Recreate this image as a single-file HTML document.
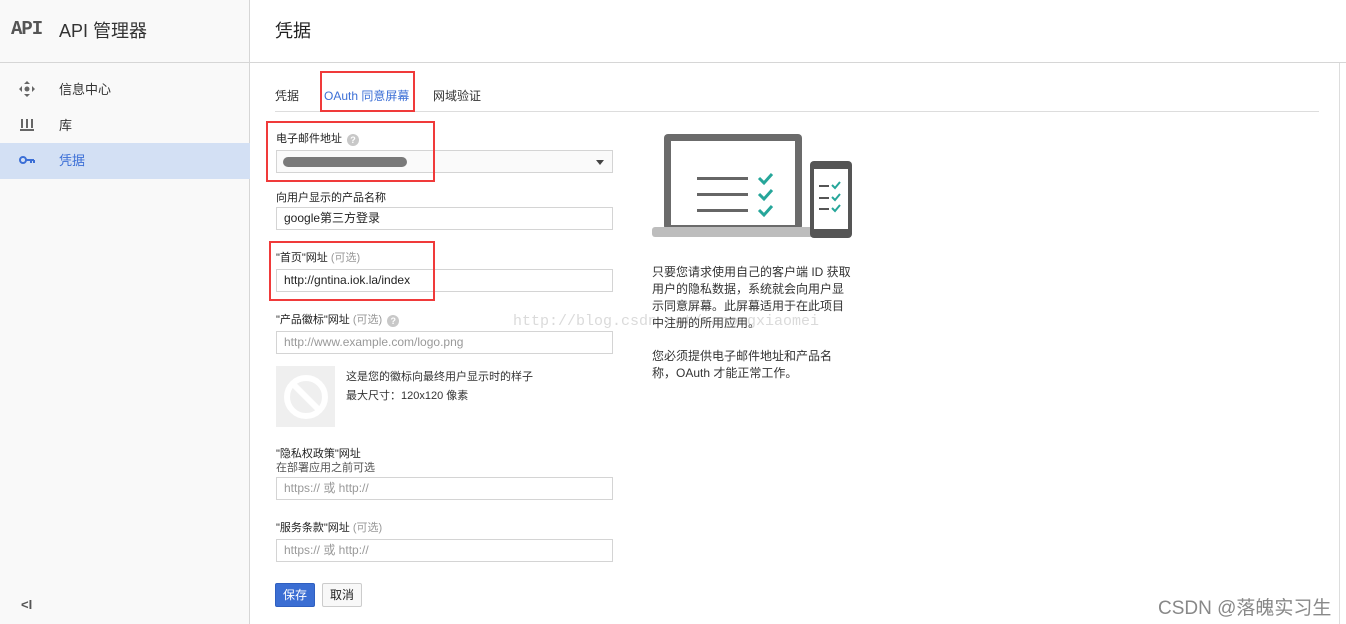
<!DOCTYPE html>
<html><head><meta charset="utf-8"><style>
*{margin:0;padding:0;box-sizing:border-box}
body{width:1346px;height:624px;overflow:hidden;background:#fff;font-family:"Liberation Sans","Noto Sans CJK SC",sans-serif;color:#222;position:relative;font-size:12px}
.a{position:absolute}
.side{left:0;top:0;width:250px;height:624px;background:#f9f9f9;border-right:1px solid #d6d6d6}
.hline{left:0;top:62px;width:1346px;height:1px;background:#d6d6d6}
.inp{position:absolute;left:276px;width:337px;height:23px;border:1px solid #d4d4d4;background:#fff;font-size:12px;padding-left:7px;line-height:21px}
.lab{position:absolute;left:276px;font-size:11px;color:#222}
.opt{color:#999}
.red{position:absolute;border:2px solid #f03a3a}
.q{display:inline-block;width:12px;height:12px;border-radius:50%;background:#c8c8c8;color:#fff;font-size:9px;text-align:center;line-height:12px;font-weight:bold;margin-left:5px;vertical-align:-1px}
.desc{left:652px;width:203px;font-size:12px;line-height:17px;color:#333}
</style></head><body>
<div class="a side"></div>
<div class="a hline"></div>
<div class="a" style="left:1339px;top:63px;width:1px;height:561px;background:#ddd"></div>
<div class="a" style="left:11px;top:18px;font-family:'Liberation Mono',monospace;font-weight:bold;font-size:19px;color:#555;letter-spacing:-1px">API</div>
<div class="a" style="left:59px;top:17px;font-size:18px;color:#333">API 管理器</div>
<div class="a" style="left:275px;top:17px;font-size:18px;color:#222">凭据</div>
<svg class="a" style="left:19px;top:81px" width="16" height="16" viewBox="0 0 16 16" fill="#666"><path d="M8 0l3 3H5zM8 16l3-3H5zM0 8l3-3v6zM16 8l-3-3v6z"/><circle cx="8" cy="8" r="2.5"/></svg>
<div class="a" style="left:59px;top:79px;font-size:13px;color:#333">信息中心</div>
<svg class="a" style="left:20px;top:118px" width="14" height="14" viewBox="0 0 14 14" fill="#666"><rect x="1" y="1" width="2" height="9"/><rect x="6" y="1" width="2" height="9"/><rect x="11" y="1" width="2" height="9"/><rect x="0" y="11" width="14" height="2"/></svg>
<div class="a" style="left:59px;top:115px;font-size:13px;color:#333">库</div>
<div class="a" style="left:0;top:143px;width:250px;height:36px;background:#d3e0f4"></div>
<svg class="a" style="left:19px;top:155px" width="16" height="10" viewBox="0 0 16 10" fill="none" stroke="#3c6fd6" stroke-width="2"><circle cx="4" cy="5" r="3"/><path d="M7 5h8M12 5v3M15 5v3"/></svg>
<div class="a" style="left:59px;top:150px;font-size:13px;color:#3c6fd6">凭据</div>
<div class="a" style="left:21px;top:597px;font-size:13px;color:#555;font-weight:bold">&lt;I</div>

<div class="a" style="left:275px;top:87px;font-size:12px;color:#333">凭据</div>
<div class="a" style="left:324px;top:87px;font-size:12px;color:#3c6fd6">OAuth 同意屏幕</div>
<div class="a" style="left:433px;top:87px;font-size:12px;color:#333">网域验证</div>
<div class="a" style="left:275px;top:111px;width:1044px;height:1px;background:#ddd"></div>
<div class="red" style="left:320px;top:71px;width:95px;height:41px"></div>

<div class="lab" style="top:130px">电子邮件地址<span class="q">?</span></div>
<div class="inp" style="top:150px;background:#fafafa"><div style="position:absolute;left:6px;top:6px;width:124px;height:10px;border-radius:5px;background:#7a7a7a"></div><div style="position:absolute;right:8px;top:9px;border:4px solid transparent;border-top:5px solid #444"></div></div>
<div class="red" style="left:266px;top:121px;width:169px;height:61px"></div>

<div class="lab" style="top:189px">向用户显示的产品名称</div>
<div class="inp" style="top:207px">google第三方登录</div>
<div class="lab" style="top:249px">"首页"网址 <span class="opt">(可选)</span></div>
<div class="inp" style="top:269px">http://gntina.iok.la/index</div>
<div class="red" style="left:269px;top:241px;width:166px;height:60px"></div>

<div class="lab" style="top:311px">"产品徽标"网址 <span class="opt">(可选)</span><span class="q">?</span></div>
<div class="inp" style="top:331px;color:#999">http://www.example.com/logo.png</div>
<div class="a" style="left:276px;top:366px;width:59px;height:61px;background:#efefef"></div>
<svg class="a" style="left:283px;top:374px" width="46" height="46" viewBox="0 0 46 46" fill="none" stroke="#fff" stroke-width="6"><circle cx="23" cy="23" r="19"/><path d="M10 10l26 26"/></svg>
<div class="a" style="left:346px;top:368px;font-size:11px;color:#333">这是您的徽标向最终用户显示时的样子</div>
<div class="a" style="left:346px;top:387px;font-size:11px;color:#333">最大尺寸：120x120 像素</div>

<div class="lab" style="top:445px">"隐私权政策"网址</div>
<div class="lab" style="top:459px;color:#555">在部署应用之前可选</div>
<div class="inp" style="top:477px;color:#999">https:// 或 http://</div>
<div class="lab" style="top:519px">"服务条款"网址 <span class="opt">(可选)</span></div>
<div class="inp" style="top:539px;color:#999">https:// 或 http://</div>
<div class="a" style="left:275px;top:583px;width:40px;height:24px;background:#3b6ed3;border:1px solid #2f5fc0;border-radius:2px;color:#fff;text-align:center;line-height:22px;font-size:12px">保存</div>
<div class="a" style="left:322px;top:583px;width:40px;height:24px;background:#f8f8f8;border:1px solid #ccc;border-radius:2px;color:#222;text-align:center;line-height:22px;font-size:12px">取消</div>

<svg class="a" style="left:652px;top:134px" width="202" height="104" viewBox="0 0 202 104">
<rect x="12" y="0" width="138" height="96" rx="4" fill="#6b6b6b"/>
<rect x="19" y="7" width="124" height="84" fill="#fff"/>
<rect x="0" y="93" width="162" height="10" rx="3" fill="#bdbdbd"/>
<g fill="#666"><rect x="45" y="43" width="51" height="3"/><rect x="45" y="59" width="51" height="3"/><rect x="45" y="75" width="51" height="3"/></g>
<g fill="none" stroke="#26a69a" stroke-width="3"><path d="M107 44l5 5 8-9M107 60l5 5 8-9M107 76l5 5 8-9"/></g>
<rect x="158" y="27" width="42" height="77" rx="4" fill="#555"/>
<rect x="162" y="35" width="34" height="60" fill="#fff"/>
<g fill="#555"><rect x="167" y="51" width="10" height="2"/><rect x="167" y="63" width="10" height="2"/><rect x="167" y="74" width="10" height="2"/></g>
<g fill="none" stroke="#26a69a" stroke-width="2"><path d="M180 51l3 3 5-6M180 63l3 3 5-6M180 74l3 3 5-6"/></g>
</svg>
<div class="a desc" style="top:264px">只要您请求使用自己的客户端 ID 获取用户的隐私数据，系统就会向用户显示同意屏幕。此屏幕适用于在此项目中注册的所用应用。</div>
<div class="a desc" style="top:348px">您必须提供电子邮件地址和产品名称，OAuth 才能正常工作。</div>
<div class="a" style="left:513px;top:313px;font-family:'Liberation Mono',monospace;font-size:15px;color:rgba(150,150,150,.35)">http://blog.csdn.net/manongxiaomei</div>
<div class="a" style="left:1158px;top:593px;font-size:19px;color:#888">CSDN @落魄实习生</div>
</body></html>
